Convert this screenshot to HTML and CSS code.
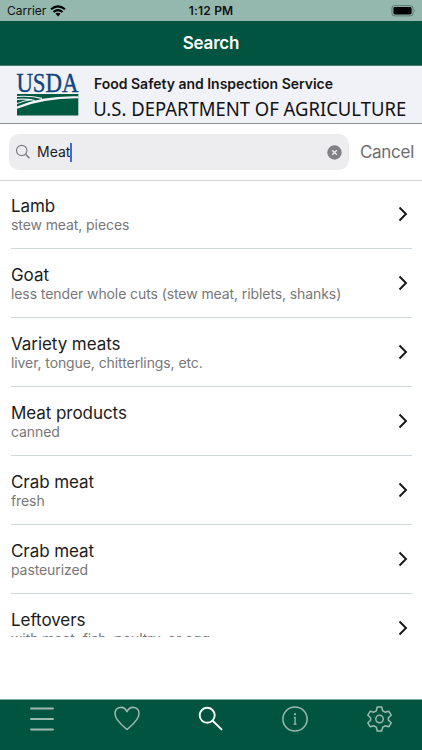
FILE: index.html
```
<!DOCTYPE html>
<html lang="en">
<head>
<meta charset="utf-8">
<title>Search</title>
<link rel="stylesheet" href="styles.css">
</head>
<body>
<div class="app">
  <div class="status">
    <div class="carrier"><span>Carrier</span>
      <svg width="16" height="12" viewBox="0 0 16 12" fill="none" stroke="#000" stroke-width="2.1"><path d="M1 4.3Q8-1.6 15 4.3M3.5 7Q8 3.2 12.5 7"/><path d="M5.5 8.7Q8 6.7 10.5 8.7L8 11.4Z" fill="#000" stroke="none"/></svg>
    </div>
    <div class="clock">1:12 PM</div>
    <svg class="battery" width="26" height="12" viewBox="0 0 26 12"><rect x=".9" y=".6" width="21.2" height="10.3" rx="2.8" fill="none" stroke="#5c7b73"/><rect x="2.4" y="2" width="18.2" height="7.4" rx="1.4"/><path d="M23.5 4q1.5 1.7 0 3.4z" fill="#5c7b73"/></svg>
  </div>
  <header class="nav"><h1>Search</h1></header>
  <div class="banner">
    <svg width="422" height="57" viewBox="0 0 422 57">
      <text class="usda" x="16.4" y="25.800" textLength="62" lengthAdjust="spacingAndGlyphs">USDA</text>
      <path d="M17 28H78.300V49.500H17Z" fill="#005941"/>
      <path d="M17 30.500Q31 29.600 42 32.300M17 33.300Q27 32.500 35 34.500" fill="none" stroke="#f1f2f7" stroke-width="1.200"/>
      <path d="M17 40.500Q42 29.400 78.300 30.300V32.300Q44 32 17 42.800Z" fill="#f1f2f7"/>
      <path d="M17 37.500Q24 34.700 32 33.500" fill="none" stroke="#f1f2f7"/>
      <text class="service" x="94" y="22.700" textLength="239">Food Safety and Inspection Service</text>
      <text class="department" x="93.200" y="50" textLength="313" lengthAdjust="spacingAndGlyphs">U.S. DEPARTMENT OF AGRICULTURE</text>
    </svg>
  </div>
  <div class="search">
    <div class="field">
      <svg width="16" height="16" viewBox="0 0 16 16" fill="none" stroke="#818185" stroke-width="1.200"><circle cx="6.700" cy="6.500" r="5.200"/><path d="M10.500 10.300L14.500 14.200" stroke-width="1.600"/></svg>
      <span class="query">Meat</span><i class="caret"></i>
      <svg class="clear" width="15" height="15" viewBox="0 0 15 15"><circle cx="7.500" cy="7.500" r="7.200" fill="#808085"/><path d="M5.200 5.200L9.800 9.800M9.800 5.200L5.200 9.800" stroke="#ededf0" stroke-width="1.300"/></svg>
    </div>
    <span class="cancel">Cancel</span>
  </div>
  <main class="list">
    <div class="row"><div><h2>Lamb</h2><p>stew meat, pieces</p></div><svg class="chevron" viewBox="0 0 10 16"><path d="M1.500 1.500L8 8L1.500 14.500"/></svg></div>
    <div class="row"><div><h2>Goat</h2><p>less tender whole cuts (stew meat, riblets, shanks)</p></div><svg class="chevron" viewBox="0 0 10 16"><path d="M1.500 1.500L8 8L1.500 14.500"/></svg></div>
    <div class="row"><div><h2>Variety meats</h2><p>liver, tongue, chitterlings, etc.</p></div><svg class="chevron" viewBox="0 0 10 16"><path d="M1.500 1.500L8 8L1.500 14.500"/></svg></div>
    <div class="row"><div><h2>Meat products</h2><p>canned</p></div><svg class="chevron" viewBox="0 0 10 16"><path d="M1.500 1.500L8 8L1.500 14.500"/></svg></div>
    <div class="row"><div><h2>Crab meat</h2><p>fresh</p></div><svg class="chevron" viewBox="0 0 10 16"><path d="M1.500 1.500L8 8L1.500 14.500"/></svg></div>
    <div class="row"><div><h2>Crab meat</h2><p>pasteurized</p></div><svg class="chevron" viewBox="0 0 10 16"><path d="M1.500 1.500L8 8L1.500 14.500"/></svg></div>
    <div class="row"><div><h2>Leftovers</h2><p>with meat, fish, poultry, or egg</p></div><svg class="chevron" viewBox="0 0 10 16"><path d="M1.500 1.500L8 8L1.500 14.500"/></svg></div>
  </main>
  <nav class="tabs">
    <svg viewBox="0 0 28 28"><path d="M3 3.500H25M3 14H25M3 24.500H25" stroke-width="1.900"/></svg>
    <svg viewBox="0 0 28 28"><path d="M14 24.500C10 21 2 15 2 8.700C2 1.500 11 0 14 6.700C17 0 26 1.500 26 8.700C26 15 18 21 14 24.500Z"/></svg>
    <svg class="active" viewBox="0 0 28 28"><circle cx="10.200" cy="10.300" r="7.500"/><path d="M15.700 15.800L24.500 24.400"/></svg>
    <svg viewBox="0 0 28 28"><circle cx="14" cy="14" r="12.100"/><path d="M13.300 12.300H14.100V19M13.100 19.200H15.100" stroke-width="1.300"/><circle cx="14" cy="9.200" r="1.100" class="dot"/></svg>
    <svg viewBox="0 0 28 28"><path d="M11.200 2H15.800L16.700 5.800L19.200 7.200L22.700 6.200L25.200 10.200L22.400 12.700V15.300L25.200 17.800L22.700 21.800L19.200 20.800L16.700 22.200L15.800 26H11.200L10.300 22.200L7.800 20.800L4.300 21.800L1.800 17.800L4.600 15.300V12.700L1.800 10.200L4.300 6.200L7.800 7.200L10.300 5.800Z"/><circle cx="13.500" cy="14" r="3.700"/></svg>
  </nav>
</div>
</body>
</html>
```
FILE: styles.css
```
* { box-sizing: border-box; }
body { margin: 0; background: #fff; font-family: Inter, sans-serif; color: #1b1b1d; }
h1, h2, p { margin: 0; }
svg { display: block; flex: none; }
.app { width: 422px; height: 750px; overflow: hidden; display: flex; flex-direction: column; }
.status { height: 21px; flex: none; background: #94b8ae; display: grid; grid-template-columns: 1fr auto 1fr; align-items: center; padding: 0 5px 0 7px; color: #111; }
.carrier { display: flex; align-items: center; gap: 4px; font-size: 12px; letter-spacing: 0; }
.clock { font-size: 12px; font-weight: 600; letter-spacing: .2px; position: relative; left: -1px; }
.battery { justify-self: end; }
.nav { height: 45px; flex: none; background: #005440; border-bottom: 1px solid #47796c; display: flex; align-items: center; justify-content: center; }
.nav h1 { color: #fff; font-size: 17px; line-height: 22px; font-weight: 600; letter-spacing: -.2px; }
.banner { height: 58px; flex: none; background: #f1f2f7; border-bottom: 1px solid #8f9094; }
.usda { font: 27px "Liberation Serif", serif; fill: #10457f; stroke: #10457f; stroke-width: .4px; }
.service { font: 600 14px Inter, sans-serif; fill: #17171a; }
.department { font: 20px "Noto Sans", sans-serif; fill: #111114; }
.search { height: 57px; flex: none; border-bottom: 1px solid #d3d3d5; display: flex; align-items: center; padding: 0 9px; }
.field { width: 340px; height: 36px; flex: none; border-radius: 10px; background: #ededf0; display: flex; align-items: center; padding: 0 7px 0 6px; }
.query { font-size: 14px; margin-left: 6px; line-height: 20px; }
.caret { width: 2px; height: 19px; background: #4267dc; }
.clear { margin-left: auto; }
.cancel { margin-left: 11px; font-size: 17px; color: #6d6d70; letter-spacing: -.3px; }
.list { height: 456px; flex: none; overflow: hidden; padding: 0 10px 0 11px; }
.row { height: 69px; border-bottom: 1px solid #d0d7da; display: flex; justify-content: space-between; align-items: flex-start; padding-top: 15px; }
.row:first-child { height: 68px; padding-top: 14px; }
.row h2 { font-size: 17px; line-height: 22px; font-weight: 400; letter-spacing: -.06px; }
.row p { font-size: 14px; line-height: 16px; color: #777779; white-space: nowrap; letter-spacing: -.09px; }
.chevron { width: 10px; height: 16px; margin: 11px 4px 0 0; fill: none; stroke: #161618; stroke-width: 1.900; }
.tabs { margin-top: auto; height: 51px; flex: none; background: #005440; border-top: 1px solid #83aaa0; display: grid; grid-template-columns: repeat(5, 1fr); justify-items: center; padding-top: 5px; }
.tabs svg { width: 28px; height: 28px; fill: none; stroke: #9db9b0; stroke-width: 1.500; stroke-linejoin: round; stroke-linecap: round; }
.tabs .active { stroke: #fff; stroke-width: 1.900; }
.tabs .dot { fill: #9db9b0; stroke: none; }
```
